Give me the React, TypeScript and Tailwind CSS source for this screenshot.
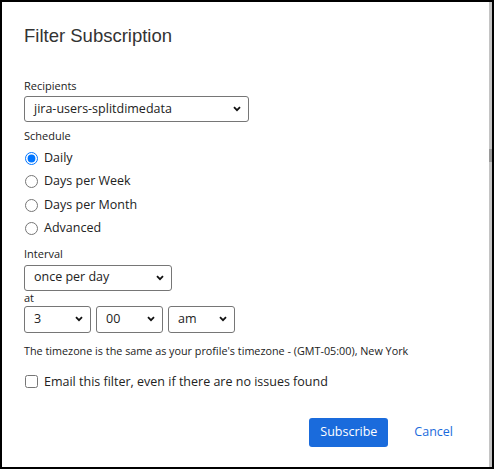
import { ReactNode } from "react";

const Chevron = () => (
  <svg width="8" height="6" viewBox="0 0 8 6" className="shrink-0">
    <path d="M1 1.2l3 3 3-3" fill="none" stroke="#111" strokeWidth="1.8" />
  </svg>
);

const Select = ({ value, className }: { value: string; className: string }) => (
  <div
    className={`flex items-center justify-between rounded-[3px] border border-[#767676] bg-white pl-[9px] pr-[7px] text-[12.5px] text-[#222] ${className}`}
  >
    <span>{value}</span>
    <Chevron />
  </div>
);

const Label = ({ children, className = "" }: { children: ReactNode; className?: string }) => (
  <div className={`text-[11px] leading-[14px] text-[#222] ${className}`}>{children}</div>
);

const schedules = ["Daily", "Days per Week", "Days per Month", "Advanced"];

export default function App() {
  return (
    <div className="flex h-[469px] w-[494px] bg-black font-['Open_Sans',sans-serif]">
      <div className="relative mb-[2px] ml-[2px] mt-[2px] flex flex-1 flex-col bg-white pl-[22px]">
        <h1 className="mt-[23px] font-['Liberation_Sans',Arial,sans-serif] text-[18.5px] leading-[22px] text-[#333]">
          Filter Subscription
        </h1>

        <Label className="mt-[32px]">Recipients</Label>
        <Select value="jira-users-splitdimedata" className="mt-[3px] h-[26px] w-[225px]" />

        <Label className="mt-[7px]">Schedule</Label>
        <div className="mt-[7px] flex flex-col gap-[7.5px]">
          {schedules.map((s, i) => (
            <label key={s} className="flex h-[16px] items-center gap-[6px] text-[12.5px] text-[#222]">
              <input type="radio" name="schedule" defaultChecked={i === 0} className="m-0 ml-[1px] h-[13px] w-[13px] accent-[#0075ff]" />
              {s}
            </label>
          ))}
        </div>

        <Label className="mt-[10px]">Interval</Label>
        <Select value="once per day" className="mt-[4px] h-[26px] w-[148px]" />
        <Label>at</Label>
        <div className="mt-[1px] flex gap-[5px]">
          <Select value="3" className="h-[27px] w-[67px]" />
          <Select value="00" className="h-[27px] w-[67px]" />
          <Select value="am" className="h-[27px] w-[67px]" />
        </div>

        <div className="mt-[11px] text-[10.8px] leading-[14px] text-[#222]">
          The timezone is the same as your profile's timezone - (GMT-05:00), New York
        </div>

        <label className="mt-[15px] flex items-center gap-[6px] text-[12.5px] text-[#222]">
          <input type="checkbox" className="m-0 ml-[1px] h-[13px] w-[13px]" />
          Email this filter, even if there are no issues found
        </label>

        <div className="mt-auto mb-[20px] flex items-center justify-end pr-[39px]">
          <button className="h-[29px] w-[79px] rounded-[3px] bg-[#1a6bdc] text-[12.5px] text-white">Subscribe</button>
          <button className="ml-[26px] text-[12.5px] text-[#1a6bdc]">Cancel</button>
        </div>

        <div className="absolute right-0 top-0 h-full w-[3px] bg-[#c4c4c4]">
          <div className="absolute left-0 top-[147px] h-[13px] w-full bg-[#9a9a9a]" />
        </div>
      </div>
      <div className="w-[2px]" />
    </div>
  );
}
